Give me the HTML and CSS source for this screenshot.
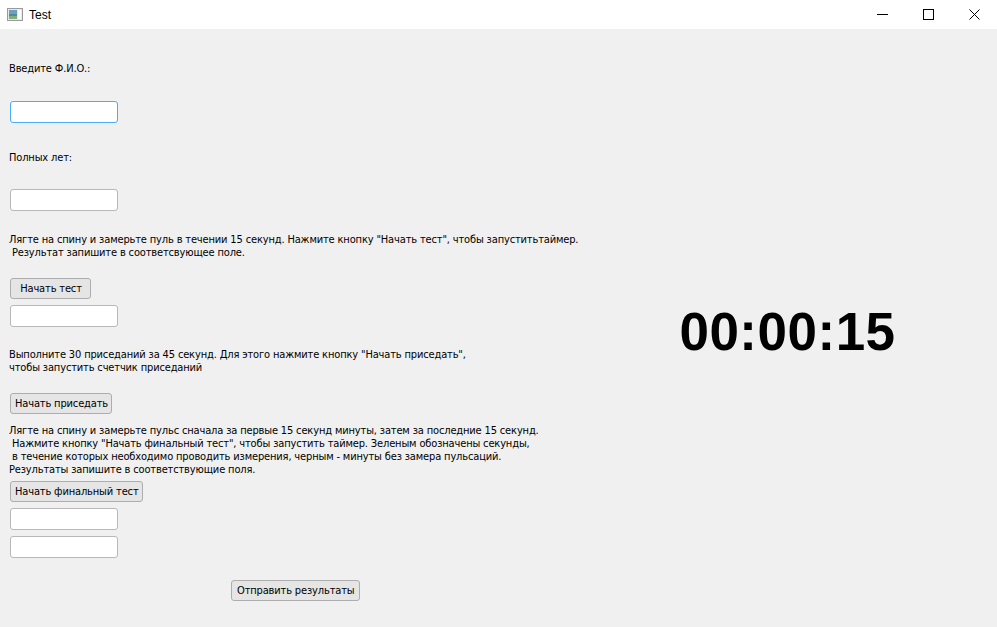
FILE: index.html
```html
<!DOCTYPE html>
<html lang="ru">
<head>
<meta charset="utf-8">
<title>Test</title>
<link rel="stylesheet" href="styles.css">
</head>
<body>
<div class="window">
  <header class="titlebar">
    <div class="title">
      <svg class="app-icon" width="16" height="13" viewBox="0 0 16 13">
        <rect x="0.5" y="0.5" width="15" height="12" fill="#e8e8e8" stroke="#9a9a9a"/>
        <rect x="2" y="2" width="8" height="9" fill="#4f8f8a"/>
        <rect x="2" y="2" width="8" height="4" fill="#6a9fc9"/>
        <rect x="2" y="8" width="8" height="3" fill="#7fb07a"/>
        <rect x="11" y="2" width="3" height="9" fill="#ffffff"/>
      </svg>
      <span class="title-text">Test</span>
    </div>
    <div class="controls">
      <span class="ctl">
        <svg width="11" height="11" viewBox="0 0 11 11"><line x1="0" y1="5.5" x2="11" y2="5.5" stroke="#000" stroke-width="1"/></svg>
      </span>
      <span class="ctl">
        <svg width="11" height="11" viewBox="0 0 11 11"><rect x="0.5" y="0.5" width="10" height="10" fill="none" stroke="#000" stroke-width="1"/></svg>
      </span>
      <span class="ctl">
        <svg width="11" height="11" viewBox="0 0 11 11"><path d="M0.5 0.5 L10.5 10.5 M10.5 0.5 L0.5 10.5" stroke="#000" stroke-width="1" fill="none"/></svg>
      </span>
    </div>
  </header>
  <main class="content">
    <section class="form">
      <p class="label l-name">Введите Ф.И.О.:</p>
      <div class="field focused f-name"></div>
      <p class="label l-age">Полных лет:</p>
      <div class="field f-age"></div>
      <p class="text t-pulse">Лягте на спину и замерьте пуль в течении 15 секунд. Нажмите кнопку "Начать тест", чтобы запуститьтаймер.<br>&nbsp;Результат запишите в соответсвующее поле.</p>
      <button class="btn b-test">Начать тест</button>
      <div class="field f-pulse"></div>
      <p class="text t-squat">Выполните 30 приседаний за 45 секунд. Для этого нажмите кнопку "Начать приседать",<br>чтобы запустить счетчик приседаний</p>
      <button class="btn b-squat">Начать приседать</button>
      <p class="text t-final">Лягте на спину и замерьте пульс сначала за первые 15 секунд минуты, затем за последние 15 секунд.<br>&nbsp;Нажмите кнопку "Начать финальный тест", чтобы запустить таймер. Зеленым обозначены секунды,<br>&nbsp;в течение которых необходимо проводить измерения, черным - минуты без замера пульсаций.<br>Результаты запишите в соответствующие поля.</p>
      <button class="btn b-final">Начать финальный тест</button>
      <div class="field f-r1"></div>
      <div class="field f-r2"></div>
      <div class="send-row">
        <button class="btn b-send">Отправить результаты</button>
      </div>
    </section>
    <section class="timer-area">
      <div class="timer">00:00:15</div>
    </section>
  </main>
</div>
</body>
</html>
```
FILE: styles.css
```css
* { box-sizing: border-box; }
html, body { margin: 0; padding: 0; }
body {
  width: 997px;
  height: 627px;
  overflow: hidden;
  font-family: "DejaVu Sans", "Liberation Sans", sans-serif;
  font-stretch: condensed;
  font-size: 11px;
  letter-spacing: -0.15px;
  color: #000;
  background: #f0f0f0;
}
.window { display: flex; flex-direction: column; height: 627px; }
.titlebar {
  height: 29px;
  background: #fff;
  display: flex;
  justify-content: space-between;
  align-items: center;
  flex: none;
}
.title { display: flex; align-items: center; padding-left: 7px; }
.app-icon { display: block; margin-right: 6px; }
.title-text { font-family: "Liberation Sans", sans-serif; font-stretch: normal; font-size: 12px; letter-spacing: 0; }
.controls { display: flex; height: 29px; }
.ctl { width: 46px; display: flex; align-items: center; justify-content: center; }
.ctl svg { display: block; }
.content { flex: 1; display: flex; }
.form { width: 578px; padding-left: 9px; display: flex; flex-direction: column; align-items: flex-start; }
.label, .text { margin: 0; line-height: 13px; white-space: nowrap; }
.field {
  width: 108px; height: 22px;
  background: #fff;
  border: 1px solid #b8b8b8;
  border-radius: 3px;
  margin-left: 1px;
}
.field.focused { border-color: #4aacff; }
.btn {
  font: inherit;
  letter-spacing: inherit;
  height: 21px;
  min-width: 81px;
  padding: 0 3px 0 4px;
  margin-left: 1px;
  background: #e5e5e5;
  border: 1px solid #adadad;
  border-radius: 3px;
  color: #000;
}
.b-send { padding: 0 5px; }
.l-name { margin-top: 33px; }
.f-name { margin-top: 26px; }
.l-age { margin-top: 28px; }
.f-age { margin-top: 25px; }
.t-pulse { margin-top: 22px; }
.b-test { margin-top: 19px; }
.f-pulse { margin-top: 6px; }
.t-squat { margin-top: 21px; }
.b-squat { margin-top: 19px; }
.t-final { margin-top: 10px; }
.b-final { margin-top: 5px; }
.f-r1 { margin-top: 6px; }
.f-r2 { margin-top: 6px; }
.send-row { margin-top: 22px; padding-left: 221px; }
.timer-area { flex: 1; display: flex; align-items: center; justify-content: center; padding-top: 6px; }
.timer {
  font-family: "Liberation Sans", sans-serif;
  font-stretch: normal;
  font-weight: bold;
  font-size: 53px;
  letter-spacing: 0.5px;
}
```
